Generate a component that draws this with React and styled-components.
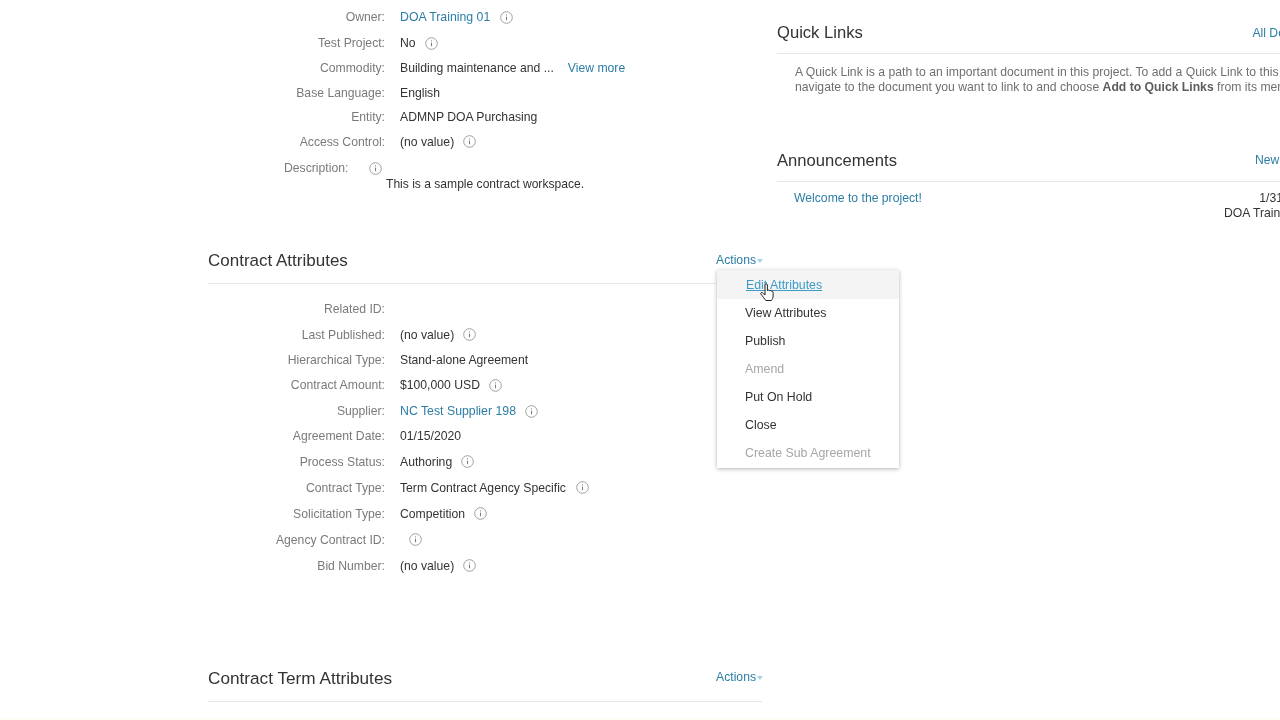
import React from "react";
import styled, { createGlobalStyle } from "styled-components";

const Global = createGlobalStyle`
  html, body { margin: 0; padding: 0; width: 1280px; height: 720px; overflow: hidden; background: #fff; }
  body { font-family: "Liberation Sans", Arial, sans-serif; font-size: 12.2px; color: #333; }
  #root { width: 1280px; height: 720px; overflow: hidden; }
`;

const Page = styled.div`
  display: flex;
  gap: 15px;
  width: 1331px;
  height: 720px;
  box-sizing: border-box;
  padding: 4px 0 0 208px;
  filter: blur(0.35px);
  border-bottom: 2px solid #fffdf3;
`;
const Column = styled.div`
  flex: 0 0 554px;
  width: 554px;
  display: flex;
  flex-direction: column;
`;
const SideColumn = styled(Column)`
  padding-top: 12px;
`;
const FieldList = styled.div`
  padding-top: ${p => p.$top ?? 0}px;
`;
const FieldRow = styled.div`
  display: flex;
  align-items: center;
  height: ${p => (p.$tall ? 26 : 24.5)}px;
`;
const Label = styled.div`
  flex: 0 0 177px;
  text-align: right;
  color: #7a7a7a;
  margin-right: 15px;
  white-space: nowrap;
`;
const Value = styled.span`
  color: #333;
  white-space: nowrap;
`;
const ItemLink = styled.a`
  color: #2b7da6;
  white-space: nowrap;
`;
const OwnerLink = styled(ItemLink)`
  font-size: 12.3px;
`;
const MoreLink = styled(ItemLink)`
  margin-left: 14px;
`;
const InfoWrap = styled.span`
  display: inline-flex;
  margin-left: ${p => p.$gap ?? 9}px;
`;
const DescHead = styled.div`
  display: flex;
  align-items: center;
  height: 28px;
  padding-left: 76px;
  color: #7a7a7a;
`;
const DescText = styled.div`
  margin-top: -5px;
  padding-left: 178px;
  height: 15px;
  line-height: 15px;
  font-size: 12.08px;
  color: #333;
`;
const SectionHeader = styled.div`
  position: relative;
  display: flex;
  align-items: center;
  justify-content: space-between;
  box-sizing: border-box;
  height: ${p => p.$h ?? 43}px;
  margin-top: ${p => p.$top ?? 0}px;
  border-bottom: 1.5px solid #e6e6e6;
  padding-bottom: 3px;
`;
const Heading = styled.h2`
  margin: 0;
  font-size: ${p => p.$size ?? 17}px;
  font-weight: 400;
  color: #333;
`;
const ActionLink = styled.a`
  display: inline-flex;
  align-items: center;
  color: #2b7da6;
  white-space: nowrap;
  min-width: ${p => p.$w ?? 0}px;
  margin-top: -2px;
  margin-right: ${p => p.$right ?? 0}px;
`;
const Caret = styled.span`
  width: 0;
  height: 0;
  margin: 2px 0 0 1px;
  border-left: 3px solid transparent;
  border-right: 3px solid transparent;
  border-top: 4px solid #a9d3e6;
`;
const Menu = styled.ul`
  position: absolute;
  z-index: 2;
  left: 509px;
  top: 29px;
  width: 182px;
  height: 198px;
  margin: 0;
  padding: 0;
  list-style: none;
  font-size: 12.35px;
  background: #fff;
  box-shadow: 0 1px 4px rgba(0, 0, 0, 0.3);
`;
const MenuItem = styled.li`
  display: flex;
  align-items: center;
  height: ${p => (p.$active ? 29 : 28)}px;
  padding-left: ${p => (p.$active ? 29 : 28)}px;
  color: ${p => (p.$disabled ? "#a6a6a6" : "#333")};
  background: ${p => (p.$active ? "#f4f4f4" : "transparent")};
  white-space: nowrap;
`;
const ActiveLabel = styled.span`
  color: #3a9bc7;
  text-decoration: underline;
`;
const Cursor = styled.svg`
  position: absolute;
  z-index: 3;
  left: 552px;
  top: 42px;
`;
const Notice = styled.p`
  margin: 11px 0 0 18px;
  line-height: 15px;
  color: #6f6f6f;
  white-space: nowrap;
  height: 79px;
`;
const Strong = styled.b`
  color: #5c5c5c;
`;
const AnnouncementRow = styled.div`
  display: flex;
  justify-content: space-between;
  padding: 9px 17.5px 0 17px;
  line-height: 15px;
`;
const Meta = styled.div`
  text-align: right;
  color: #333;
  white-space: nowrap;
`;

const Info = ({ gap }) => (
  <InfoWrap $gap={gap}>
    <svg width="13" height="13" viewBox="0 0 13 13" fill="none">
      <circle cx="6.5" cy="6.5" r="5.8" stroke="#9f9f9f" strokeWidth="1" />
      <path d="M6.5 5.6v3.6" stroke="#7d7d7d" strokeWidth="1.1" />
      <path d="M6.5 3.4v1" stroke="#7d7d7d" strokeWidth="1.1" />
    </svg>
  </InfoWrap>
);

const Field = ({ label, children, tall }) => (
  <FieldRow $tall={tall}>
    <Label>{label}</Label>
    {children}
  </FieldRow>
);

const menuItems = [
  { t: "View Attributes" },
  { t: "Publish" },
  { t: "Amend", d: true },
  { t: "Put On Hold" },
  { t: "Close" },
  { t: "Create Sub Agreement", d: true },
];

const Actions = () => (
  <ActionLink $right={-1}>
    Actions
    <Caret />
  </ActionLink>
);

export default function App() {
  return (
    <>
      <Global />
      <Page>
        <Column>
          <Field label="Owner:" tall><OwnerLink>DOA Training 01</OwnerLink><Info gap={9.5} /></Field>
          <Field label="Test Project:" tall><Value>No</Value><Info /></Field>
          <Field label="Commodity:"><Value>Building maintenance and ...</Value><MoreLink>View more</MoreLink></Field>
          <Field label="Base Language:"><Value>English</Value></Field>
          <Field label="Entity:"><Value>ADMNP DOA Purchasing</Value></Field>
          <Field label="Access Control:"><Value>(no value)</Value><Info /></Field>
          <DescHead>Description:<Info gap={21} /></DescHead>
          <DescText>This is a sample contract workspace.</DescText>

          <SectionHeader $top={49}>
            <Heading>Contract Attributes</Heading>
            <Actions />
            <Menu>
              <MenuItem $active><ActiveLabel>Edit Attributes</ActiveLabel></MenuItem>
              {menuItems.map(m => (
                <MenuItem key={m.t} $disabled={m.d}>{m.t}</MenuItem>
              ))}
            </Menu>
            <Cursor width="14" height="18" viewBox="0 0 14 18">
              <path
                d="M5 2c0-1.5 2.4-1.5 2.4 0v5.5c.6-.7 1.9-.6 2.1.3.6-.6 1.8-.4 2 .5.6-.4 1.6 0 1.6 1V13c0 2-.8 3.2-1.6 4.5H5.8C4.6 16 3 13.5 1 11.2c-.8-1 .4-2.2 1.5-1.4L5 12z"
                fill="#fff"
                stroke="#222"
                strokeWidth="1"
              />
            </Cursor>
          </SectionHeader>
          <FieldList $top={13}>
            <Field label="Related ID:"><Value /></Field>
            <Field label="Last Published:" tall><Value>(no value)</Value><Info /></Field>
            <Field label="Hierarchical Type:"><Value>Stand-alone Agreement</Value></Field>
            <Field label="Contract Amount:" tall><Value>$100,000 USD</Value><Info /></Field>
            <Field label="Supplier:" tall><OwnerLink>NC Test Supplier 198</OwnerLink><Info gap={9.5} /></Field>
            <Field label="Agreement Date:"><Value>01/15/2020</Value></Field>
            <Field label="Process Status:" tall><Value>Authoring</Value><Info /></Field>
            <Field label="Contract Type:" tall><Value>Term Contract Agency Specific</Value><Info gap={10.5} /></Field>
            <Field label="Solicitation Type:" tall><Value>Competition</Value><Info /></Field>
            <Field label="Agency Contract ID:" tall><Info /></Field>
            <Field label="Bid Number:" tall><Value>(no value)</Value><Info /></Field>
          </FieldList>

          <SectionHeader $top={80} $h={43}>
            <Heading $size={17.2}>Contract Term Attributes</Heading>
            <Actions />
          </SectionHeader>
        </Column>
        <SideColumn>
          <SectionHeader $h={38}>
            <Heading $size={16.6}>Quick Links</Heading>
            <ItemLink>All Documents</ItemLink>
          </SectionHeader>
          <Notice>
            A Quick Link is a path to an important document in this project. To add a Quick Link to this project,
            <br />
            navigate to the document you want to link to and choose <Strong>Add to Quick Links</Strong> from its menu.
          </Notice>
          <SectionHeader $h={38}>
            <Heading $size={16.6}>Announcements</Heading>
            <ActionLink $w={76}>New</ActionLink>
          </SectionHeader>
          <AnnouncementRow>
            <ItemLink>Welcome to the project!</ItemLink>
            <Meta>
              1/31/2020
              <br />
              DOA Training 01
            </Meta>
          </AnnouncementRow>
        </SideColumn>
      </Page>
    </>
  );
}
